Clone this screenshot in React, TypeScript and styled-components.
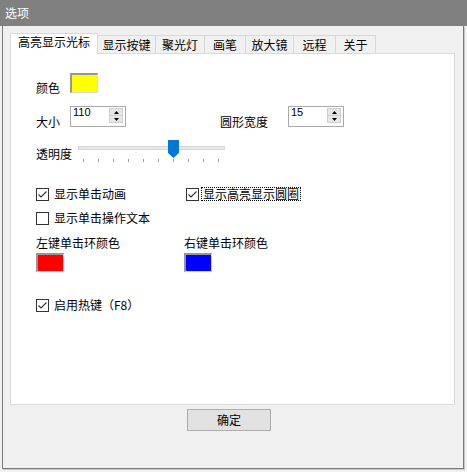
import React from "react";
import styled, { createGlobalStyle } from "styled-components";

const GlobalStyle = createGlobalStyle`
  html, body { margin: 0; padding: 0; background: #f0f0f0; }
  body {
    font-family: "Noto Sans CJK SC", "Noto Sans", sans-serif;
    font-size: 12px;
    line-height: 14px;
    color: #000;
  }
`;

const Window = styled.div`
  width: 467px;
  height: 472px;
  display: flex;
  flex-direction: column;
  background: #f0f0f0;
`;

const TitleBar = styled.div`
  height: 26px;
  flex-shrink: 0;
  background: #808080;
  color: #fff;
  display: flex;
  align-items: center;
  padding-left: 5px;
  font-size: 12px;
`;

const Client = styled.div`
  flex: 1;
  margin: 0 3px 3px 2px;
  border: 1px solid #7a7a7a;
  border-top: none;
  box-shadow: 1px 1px 0 #c8c8c8;
  background: #f0f0f0;
  padding: 7px 8px 0 7px;
  display: flex;
  flex-direction: column;
`;

const TabStrip = styled.div`
  display: flex;
  align-items: flex-end;
  height: 20px;
  position: relative;
  z-index: 1;
`;

const Tab = styled.div<{ $w: number; $active?: boolean }>`
  box-sizing: border-box;
  width: ${(p) => p.$w}px;
  height: ${(p) => (p.$active ? 21 : 18)}px;
  margin-left: ${(p) => (p.$active ? 0 : -1)}px;
  margin-bottom: ${(p) => (p.$active ? -1 : 0)}px;
  border: 1px solid #d9d9d9;
  border-bottom: none;
  background: ${(p) => (p.$active ? "#fff" : "#f0f0f0")};
  display: flex;
  justify-content: center;
  align-items: ${(p) => (p.$active ? "flex-start" : "center")};
  padding-top: ${(p) => (p.$active ? 1 : 0)}px;
  white-space: nowrap;
  position: relative;
  z-index: ${(p) => (p.$active ? 2 : 1)};
`;

const Panel = styled.div`
  box-sizing: border-box;
  height: 352px;
  border: 1px solid #d9d9d9;
  background: #fff;
  padding: 19px 0 0 25px;
  display: flex;
  flex-direction: column;
`;

const FieldRow = styled.div<{ $h: number; $mt?: number }>`
  display: flex;
  align-items: center;
  height: ${(p) => p.$h}px;
  margin-top: ${(p) => p.$mt ?? 0}px;
`;

const Label = styled.div<{ $w: number; $ml?: number; $pt?: number }>`
  width: ${(p) => p.$w}px;
  margin-left: ${(p) => p.$ml ?? 0}px;
  padding-top: ${(p) => p.$pt ?? 10}px;
  white-space: nowrap;
`;

const Swatch = styled.div<{ $color: string; $h?: number }>`
  box-sizing: border-box;
  width: 28px;
  height: ${(p) => p.$h ?? 20}px;
  background: ${(p) => p.$color};
  border-top: 2px solid #969696;
  border-left: 2px solid #969696;
  border-right: 1px solid #dadada;
  border-bottom: 1px solid #dadada;
`;

const SpinBox = styled.div`
  box-sizing: border-box;
  width: 56px;
  height: 21px;
  border: 1px solid #a9a9a9;
  background: #fff;
  display: flex;
  align-items: flex-start;
`;

const SpinText = styled.div`
  flex: 1;
  font-family: "Liberation Sans", Arial, sans-serif;
  font-size: 11px;
  line-height: 11px;
  padding: 0 0 0 2px;
  color: #000;
`;

const SpinButtons = styled.div`
  box-sizing: border-box;
  width: 14px;
  height: 15px;
  margin: 1px 2px 0 0;
  border: 1px solid #cfcfcf;
  background: #e6e6e6;
  display: flex;
  flex-direction: column;
`;

const SpinHalf = styled.div<{ $bottom?: boolean }>`
  flex: 1;
  display: flex;
  align-items: center;
  justify-content: center;
  border-top: ${(p) => (p.$bottom ? "1px solid #cfcfcf" : "none")};
`;

const Slider = styled.div`
  width: 147px;
  height: 24px;
  position: relative;
  display: flex;
  flex-direction: column;
`;

const Track = styled.div`
  box-sizing: border-box;
  margin-top: 6px;
  height: 4px;
  background: #e7e7e7;
  border: 1px solid #d6d6d6;
`;

const Ticks = styled.div`
  margin-top: 9px;
  padding: 0 6px 0 5px;
  display: flex;
  justify-content: space-between;
`;

const Tick = styled.div`
  width: 1px;
  height: 3px;
  background: #a0a0a0;
`;

const Thumb = styled.svg`
  position: absolute;
  left: 90px;
  top: 0;
`;

const CheckGrid = styled.div<{ $mt: number }>`
  display: grid;
  grid-template-columns: 150px auto;
  row-gap: 10px;
  margin-top: ${(p) => p.$mt}px;
`;

const CheckItem = styled.div`
  display: flex;
  align-items: center;
  gap: 5px;
  height: 14px;
  white-space: nowrap;
`;

const Box = styled.div`
  box-sizing: border-box;
  width: 13px;
  height: 13px;
  border: 1px solid #333;
  background: #fff;
  display: flex;
  align-items: center;
  justify-content: center;
`;

const FocusText = styled.span`
  border: 1px dotted #000;
  padding: 0 1px;
  margin-left: -3px;
  line-height: 12px;
`;

const ColorGrid = styled.div`
  display: grid;
  grid-template-columns: 148px auto;
  margin-top: 11px;
`;

const ColorCell = styled.div`
  display: flex;
  flex-direction: column;
  gap: 3px;
  align-items: flex-start;
`;

const ButtonRow = styled.div`
  margin-top: 4px;
  padding-left: 177px;
  display: flex;
`;

const Button = styled.div`
  box-sizing: border-box;
  width: 84px;
  height: 22px;
  background: #e1e1e1;
  border: 1px solid #adadad;
  display: flex;
  align-items: center;
  justify-content: center;
`;

const CheckMark = () => (
  <svg width="11" height="11" viewBox="0 0 11 11">
    <path d="M1.5 5.5 L4 8 L9.5 2.5" fill="none" stroke="#333" strokeWidth="1.1" />
  </svg>
);

const Check = ({ checked, children, focus }: { checked?: boolean; children: React.ReactNode; focus?: boolean }) => (
  <CheckItem>
    <Box>{checked && <CheckMark />}</Box>
    {focus ? <FocusText>{children}</FocusText> : <span>{children}</span>}
  </CheckItem>
);

const Spin = ({ value }: { value: string }) => (
  <SpinBox>
    <SpinText>{value}</SpinText>
    <SpinButtons>
      <SpinHalf>
        <svg width="5" height="3" viewBox="0 0 5 3"><path d="M2.5 0 L5 3 L0 3 Z" fill="#000" /></svg>
      </SpinHalf>
      <SpinHalf $bottom>
        <svg width="5" height="3" viewBox="0 0 5 3"><path d="M0 0 L5 0 L2.5 3 Z" fill="#000" /></svg>
      </SpinHalf>
    </SpinButtons>
  </SpinBox>
);

const tabs: { label: string; w: number }[] = [
  { label: "高亮显示光标", w: 88 },
  { label: "显示按键", w: 59 },
  { label: "聚光灯", w: 50 },
  { label: "画笔", w: 42 },
  { label: "放大镜", w: 49 },
  { label: "远程", w: 43 },
  { label: "关于", w: 41 },
];

export default function App() {
  return (
    <>
      <GlobalStyle />
      <Window>
        <TitleBar>选项</TitleBar>
        <Client>
          <TabStrip>
            {tabs.map((t, i) => (
              <Tab key={t.label} $w={t.w} $active={i === 0}>
                {t.label}
              </Tab>
            ))}
          </TabStrip>
          <Panel>
            <FieldRow $h={20}>
              <Label $w={34}>颜色</Label>
              <Swatch $color="#ffff00" />
            </FieldRow>
            <FieldRow $h={21} $mt={13}>
              <Label $w={34}>大小</Label>
              <Spin value="110" />
              <Label $w={68} $ml={94}>圆形宽度</Label>
              <Spin value="15" />
            </FieldRow>
            <FieldRow $h={24} $mt={13}>
              <Label $w={42} $pt={4}>透明度</Label>
              <Slider>
                <Track />
                <Ticks>
                  {Array.from({ length: 10 }).map((_, i) => (
                    <Tick key={i} />
                  ))}
                </Ticks>
                <Thumb width="11" height="18" viewBox="0 0 11 18">
                  <path d="M0 0 H11 V13 L5.5 18 L0 13 Z" fill="#0078d7" />
                </Thumb>
              </Slider>
            </FieldRow>
            <CheckGrid $mt={23}>
              <Check checked>显示单击动画</Check>
              <Check checked focus>显示高亮显示圆圈</Check>
              <Check>显示单击操作文本</Check>
            </CheckGrid>
            <ColorGrid>
              <ColorCell>
                <span>左键单击环颜色</span>
                <Swatch $color="#ff0000" $h={19} />
              </ColorCell>
              <ColorCell>
                <span>右键单击环颜色</span>
                <Swatch $color="#0000ff" $h={19} />
              </ColorCell>
            </ColorGrid>
            <CheckGrid $mt={26}>
              <Check checked>启用热键（F8）</Check>
            </CheckGrid>
          </Panel>
          <ButtonRow>
            <Button>确定</Button>
          </ButtonRow>
        </Client>
      </Window>
    </>
  );
}
